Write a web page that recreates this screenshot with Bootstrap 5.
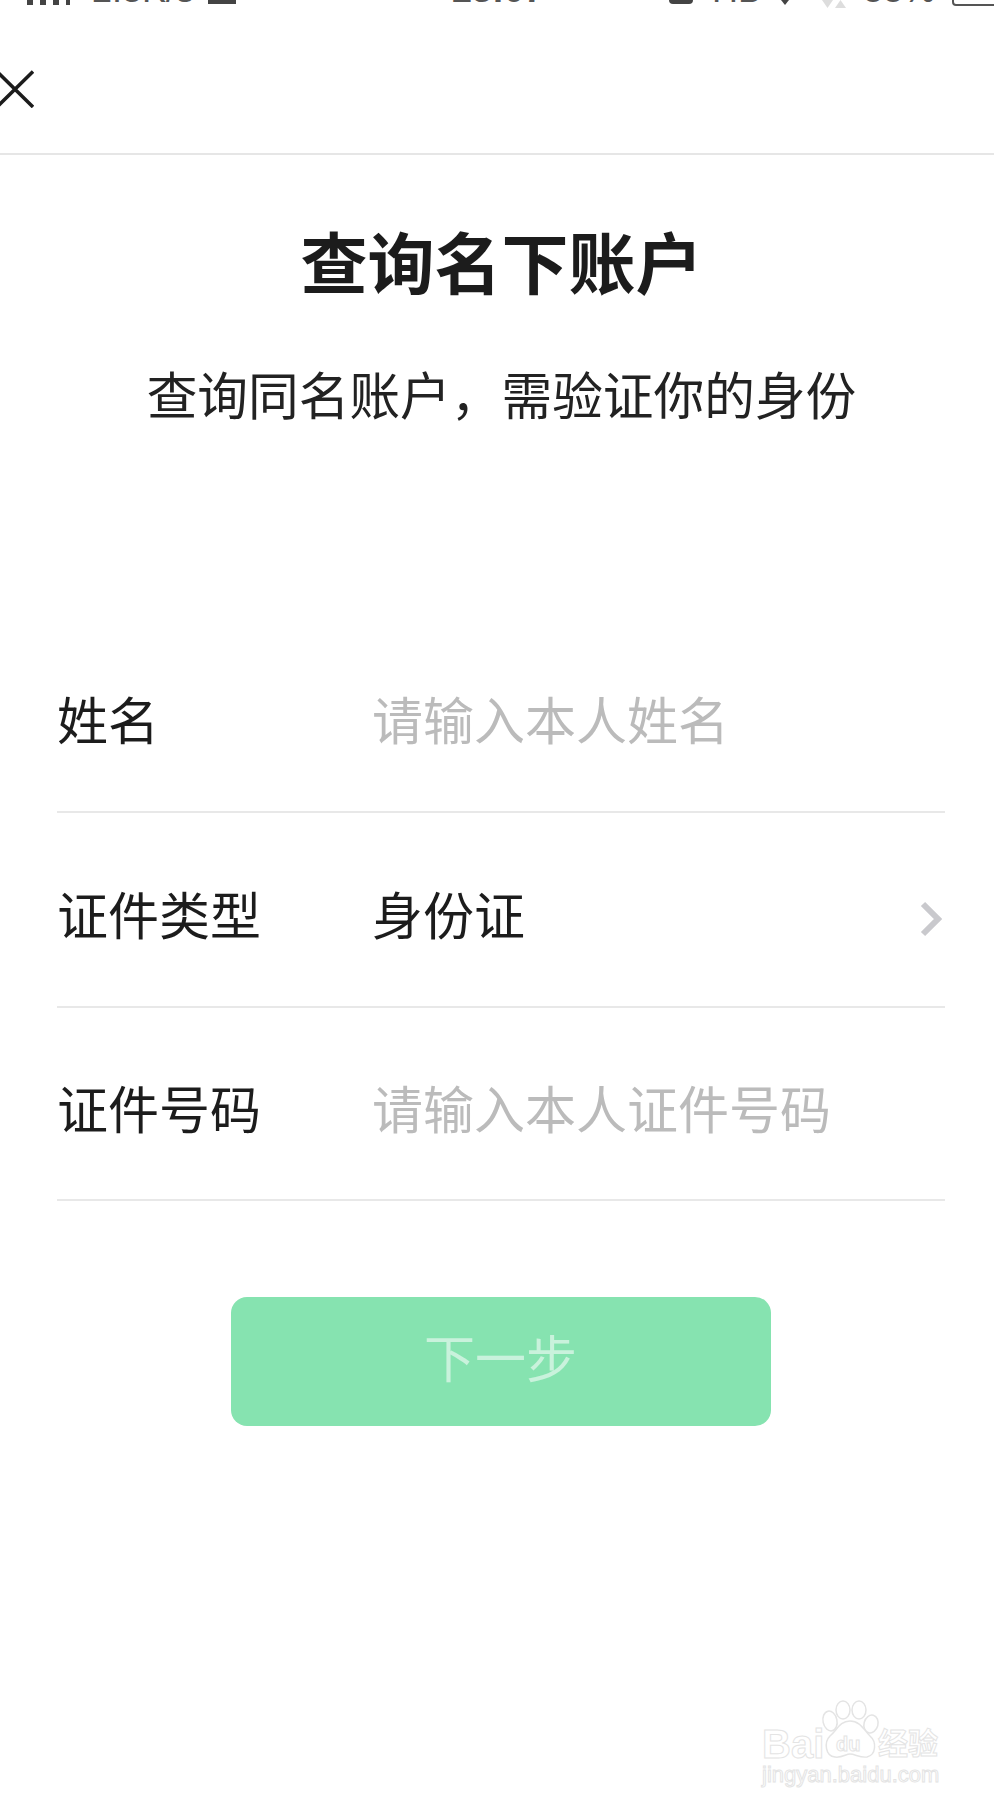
<!DOCTYPE html>
<html lang="zh">
<head>
  <meta charset="UTF-8">
  <meta name="viewport" content="width=device-width, initial-scale=1.0">
  <title>查询名下账户</title>
  <link href="https://cdn.jsdelivr.net/npm/bootstrap@5.3.0/dist/css/bootstrap.min.css" rel="stylesheet">
  <style>
    body {
      font-family: "Liberation Sans", "Noto Sans CJK SC", sans-serif;
      color: #1c1c1c;
      background: #fff;
      width: 994px;
      height: 1808px;
      overflow: hidden;
      position: relative;
    }
    .status-strip {
      height: 9px;
      overflow: hidden;
      color: #555;
      font-size: 36px;
      line-height: 36px;
    }
    .status-strip > * { margin-top: -28px; flex: none; }
    .status-strip .sig { margin-left: 27px; width: 43px; height: 5px; margin-top: 0;
      background: repeating-linear-gradient(90deg, #444 0 6px, transparent 6px 13px); }
    .status-strip .speed { margin-left: 22px; width: 103px; }
    .status-strip .sim { margin-left: 13px; width: 28px; height: 4px; margin-top: 0; background: #444; }
    .status-strip .clock { margin-left: 216px; width: 95px; font-weight: 700; }
    .status-strip .dot { margin-left: 122px; width: 24px; height: 4px; margin-top: 0; background: #444; border-radius: 0 0 12px 12px; }
    .status-strip .hd { margin-left: 19px; width: 44px; }
    .status-strip .arrow { margin-left: 25px; width: 0; height: 0; border: 4px solid transparent; border-top: 5px solid #444; margin-top: 0; }
    .status-strip .net { margin-left: 33px; }
    .status-strip .net2 { margin-left: 2px; }
    .status-strip .net, .status-strip .net2 { width: 11px; height: 8px; margin-top: 0; background: #ddd; }
    .status-strip .net { clip-path: polygon(0 0, 100% 0, 50% 100%); }
    .status-strip .net2 { clip-path: polygon(50% 0, 100% 100%, 0 100%); }
    .status-strip .pct { margin-left: 17px; width: 76px; }
    .status-strip .batt { margin-left: 13px; width: 60px; height: 36px; border: 2px solid #555; border-radius: 4px; margin-top: -30px; }

    .top-head { height: 146px; border-bottom: 2px solid #e6e6e6; padding-top: 61px; }
    .page-head { padding-left: 9px; }
    .page-title { font-size: 67px; font-weight: 700; line-height: 80px; margin: 71px 0 0; color: #1c1c1c; }
    .page-sub { font-size: 50.700px; line-height: 72px; margin: 56px 0 0; color: #222; }
    .id-form { margin: 184px 49px 0 57px; }
    .form-line { height: 195px; border-bottom: 2px solid #e8e8e8; font-size: 51px; }
    .form-line:last-child { height: 193px; }
    .line-key { width: 315px; flex: none; padding-top: 18px; }
    .line-val { padding-top: 18px; }
    .id-form .form-control {
      font: inherit;
      color: #1c1c1c;
      border: 0;
      padding: 0;
      border-radius: 0;
      box-shadow: none;
    }
    .id-form .form-control::placeholder { color: #bbb; opacity: 1; }
    .chev { margin-right: 3px; margin-top: 18px; }
    .btn-wrap { margin-top: 96px; padding-left: 7px; }
    .btn-next, .btn-next:disabled {
      width: 540px;
      height: 129px;
      background: #86e3b0;
      border: 0;
      border-radius: 16px;
      color: #c9f2dc;
      font-size: 51px;
      line-height: 1;
      opacity: 1;
      padding: 0 0 2px;
    }
    .wm { position: absolute; left: 758px; top: 1696px; width: 190px; height: 96px; }
    .wm-big, .wm-cn, .wm-site {
      position: absolute;
      color: #fff;
      -webkit-text-stroke: 1px #e4e4e4;
      white-space: nowrap;
    }
    .wm-big { left: 4px; top: 28px; font-size: 40px; line-height: 40px; font-weight: 700; }
    .wm-cn { left: 120px; top: 30px; font-size: 30px; line-height: 36px; font-weight: 700; }
    .wm-site { left: 4px; top: 65px; font-size: 22px; line-height: 28px; }
    .wm-du { position: absolute; left: 78px; top: 36px; font-size: 20px; line-height: 24px; font-weight: 700; color: #fff; -webkit-text-stroke: 1px #e4e4e4; }
    .wm svg { position: absolute; left: 62px; top: 4px; }
  </style>
</head>
<body>

  <div class="status-strip d-flex align-items-start">
    <span class="sig"></span>
    <span class="speed">2.3K/s</span>
    <span class="sim"></span>
    <span class="clock">23:07</span>
    <span class="dot"></span>
    <span class="hd">HD</span>
    <span class="arrow"></span>
    <span class="net"></span>
    <span class="net2"></span>
    <span class="pct">88%</span>
    <span class="batt"></span>
  </div>

  <div class="top-head">
    <svg width="34" height="38" viewBox="0 0 34 38" class="d-block" aria-label="关闭">
      <path d="M-3 1.500L33 37M33 1.500L-3 37" stroke="#1c1c1c" stroke-width="3.500" fill="none"/>
    </svg>
  </div>

  <div class="page-head text-center">
    <h1 class="page-title">查询名下账户</h1>
    <p class="page-sub">查询同名账户，需验证你的身份</p>
  </div>

  <form class="id-form">
    <div class="form-line d-flex align-items-center">
      <div class="line-key">姓名</div>
      <div class="line-val flex-grow-1"><input type="text" class="form-control" placeholder="请输入本人姓名"></div>
    </div>
    <div class="form-line d-flex align-items-center">
      <div class="line-key">证件类型</div>
      <div class="line-val flex-grow-1">身份证</div>
      <svg class="chev" width="22" height="36" viewBox="0 0 22 36">
        <path d="M3 3L18 18L3 33" stroke="#c9c9cd" stroke-width="6" fill="none"/>
      </svg>
    </div>
    <div class="form-line d-flex align-items-center">
      <div class="line-key">证件号码</div>
      <div class="line-val flex-grow-1"><input type="text" class="form-control" placeholder="请输入本人证件号码"></div>
    </div>
  </form>

  <div class="btn-wrap text-center">
    <button type="button" class="btn btn-next" disabled>下一步</button>
  </div>

  <div class="wm">
    <span class="wm-big">Bai</span>
    <svg width="60" height="66" viewBox="0 0 60 66" fill="#fff" stroke="#e4e4e4" stroke-width="1.500">
      <ellipse cx="10" cy="21" rx="7" ry="10" transform="rotate(-12 10 21)"/>
      <ellipse cx="23" cy="10" rx="7" ry="9"/>
      <ellipse cx="39" cy="10" rx="7" ry="9"/>
      <ellipse cx="51" cy="24" rx="7" ry="9" transform="rotate(15 51 24)"/>
      <path d="M30 21C20 21 17 30 10 36C4 42 5 56 15 57C22 58 26 54 30 54C35 54 40 58 47 57C56 55 57 42 50 36C44 30 40 21 30 21Z"/>
    </svg>
    <span class="wm-du">du</span>
    <span class="wm-cn">经验</span>
    <span class="wm-site">jingyan.baidu.com</span>
  </div>

  <script src="https://cdn.jsdelivr.net/npm/bootstrap@5.3.0/dist/js/bootstrap.bundle.min.js"></script>
</body>
</html>
